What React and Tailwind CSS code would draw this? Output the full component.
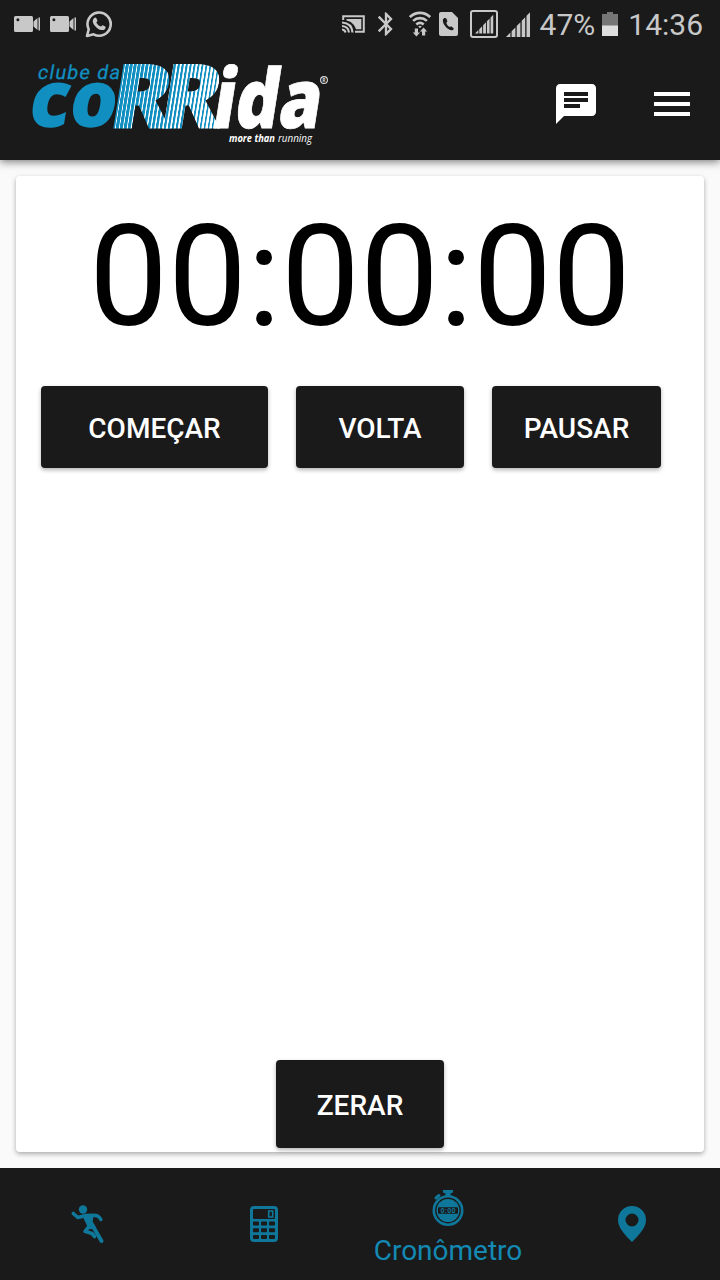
import { useEffect, useState } from 'react';
import { MdChat, MdMenu, MdBluetooth } from 'react-icons/md';

const CamcorderIcon = () => (
  <svg className="w-[26px] h-4" viewBox="0 0 26 16" fill="#c8c8c8">
    <path fillRule="evenodd" d="M1.500 0h16A1.500 1.500 0 0 1 19 1.500v13a1.500 1.500 0 0 1-1.500 1.500h-16A1.500 1.500 0 0 1 0 14.500v-13A1.500 1.500 0 0 1 1.500 0zM3.900 2.300a1.500 1.500 0 1 0 0 3 1.500 1.500 0 0 0 0-3z" />
    <path d="M19.500 5.500L23.500 2v12l-4-3.500zM24.500 1.500H26v13h-1.500z" />
  </svg>
);

const WhatsappIcon = () => (
  <svg className="w-7 h-7" viewBox="0 0 28 28">
    <path d="M2 26l1.700-6.800A11.600 11.600 0 1 1 8.600 24.300z" fill="none" stroke="#c8c8c8" strokeWidth="2.600" strokeLinejoin="round" />
    <path d="M9 8.200c.8-1 1.900-.9 2.400.1l1 2.200c.2.600-.8 1.500-1 2 .8 1.900 2.300 3.200 4.300 4.100.700-.1 1.400-1.500 2-1.300l2.500 1.200c.8.500.4 1.900-.4 2.700-1.800 1.600-4.700.9-7.200-.8-2.300-1.700-4.100-3.900-4.700-6.200-.3-1.600.1-2.900 1.100-4z" fill="#c8c8c8" />
  </svg>
);

const CastIcon = () => (
  <svg className="w-[23px] h-[18px]" viewBox="0 0 23 18">
    <path d="M1.200 5V1.200h20.600v15.600H13" fill="none" stroke="#c8c8c8" strokeWidth="2" />
    <path d="M4.500 4h14.800v10.300H14C12.500 9.500 9 6.300 4.500 5.500z" fill="#c8c8c8" />
    <path d="M0 7.500c6 .3 10 4 10.500 10M0 11c4 .3 6.600 2.700 7 6.500M0 14.500c2 .2 3.300 1.400 3.500 3" fill="none" stroke="#c8c8c8" strokeWidth="2.200" />
  </svg>
);

const WifiIcon = () => (
  <svg className="w-[22px] h-[26px]" viewBox="0 0 22 26">
    <g fill="none" stroke="#c8c8c8" strokeWidth="2.600">
      <path d="M.8 6c6-5.500 14.400-5.500 20.400 0M4.100 9.900c4-3.700 9.800-3.700 13.800 0M7.300 13.500c2.200-2 5.200-2 7.400 0" />
    </g>
    <path d="M9.200 15.300q1.800-1.200 3.600 0L11 17.200zM5.800 17.500h3.200v4h2L7.400 25.500 3.800 21.500h2zM14.600 16.500l3.600 4h-2v4H13v-4h-2z" fill="#c8c8c8" />
  </svg>
);

const CallCardIcon = () => (
  <svg className="w-[19px] h-6" viewBox="0 0 19 24">
    <path d="M2 0h11l6 6v16a2 2 0 0 1-2 2H2a2 2 0 0 1-2-2V2a2 2 0 0 1 2-2z" fill="#c8c8c8" />
    <path d="M5 6.200c-1.800.8-1.300 4.500.9 7.500 2.500 3.400 6.200 5.400 8 4.300.9-.6 1-1.400.4-2l-1.800-1.500c-.7-.4-1.400.6-2.100.3-1.400-.8-2.500-2.300-3-3.900 0-.7 1.100-.8 1-1.600l-.9-2.500c-.4-.9-1.500-1-2.500-.6z" fill="#1a1a1a" />
  </svg>
);

const SignalBars = () => (
  <path d="M0 25L4.400 20.500V25zM5.600 19.300L9.400 15.400V25H5.600zM10.700 14L14.400 10.200V25h-3.700zM15.700 8.800L19.200 5.200V25h-3.500zM20.500 3.800L24 .2V25h-3.500z" />
);

const SimSignalIcon = () => (
  <svg className="w-7 h-7" viewBox="0 0 28 28" fill="#c8c8c8">
    <rect x="1" y="1" width="26" height="26" rx="2" fill="none" stroke="#c8c8c8" strokeWidth="2" />
    <g transform="translate(5 4.500) scale(.76)">
      <SignalBars />
    </g>
  </svg>
);

const SignalIcon = () => (
  <svg className="w-6 h-[25px]" viewBox="0 0 24 25" fill="#c8c8c8">
    <SignalBars />
  </svg>
);

const BatteryIcon = () => (
  <svg className="w-4 h-6" viewBox="0 0 16 24">
    <path d="M0 2h5V0h6v2h5v12H0z" fill="#767676" />
    <path d="M0 13.500h16V24H0z" fill="#dedede" />
  </svg>
);

const StatusBar = () => (
  <div className="h-12 shrink-0 flex items-center pl-[14px] pr-[17px] text-[30px] leading-none text-[#c8c8c8]">
    <CamcorderIcon />
    <div className="ml-[10px]">
      <CamcorderIcon />
    </div>
    <div className="ml-[9px]">
      <WhatsappIcon />
    </div>
    <div className="ml-auto flex items-center">
      <CastIcon />
      <MdBluetooth className="w-7 h-7 ml-[7px]" />
      <div className="ml-[9px]">
        <WifiIcon />
      </div>
      <div className="ml-2">
        <CallCardIcon />
      </div>
      <div className="ml-[12px]">
        <SimSignalIcon />
      </div>
      <div className="ml-[8px]">
        <SignalIcon />
      </div>
      <span className="ml-[10px] mr-[1px] mt-[2px]">47%</span>
      <div className="ml-[6px]">
        <BatteryIcon />
      </div>
      <span className="ml-[10px] mt-[2px]">14:36</span>
    </div>
  </div>
);

const STRIPES = 27;

// blue on the left, fading to white as the stripes get wider
const stripeStops = Array.from({ length: STRIPES }, (_, i) => {
  const start = i / STRIPES;
  const blue = 0.75 - 0.5 * start;
  return [
    { at: start, color: '#118fc0' },
    { at: start + (blue - 0.1) / STRIPES, color: '#118fc0' },
    { at: start + (blue + 0.12) / STRIPES, color: '#ffffff' },
    { at: start + 0.88 / STRIPES, color: '#ffffff' },
  ];
}).flat();

const Logo = () => (
  <svg className="w-[300px] h-28 overflow-visible" viewBox="30 48 300 112" fontFamily="'Open Sans', sans-serif">
    <defs>
      <linearGradient id="stripes" gradientUnits="userSpaceOnUse" x1="5" y1="0" x2="113" y2="0">
        {stripeStops.map((stop, i) => (
          <stop key={i} offset={stop.at} stopColor={stop.color} />
        ))}
      </linearGradient>
    </defs>
    <text transform="translate(37 79) skewX(-10)" fontFamily="Roboto, sans-serif" fontSize="19.500" fill="#118fc0" stroke="#118fc0" strokeWidth=".3" textLength="82" lengthAdjust="spacing">clube da</text>
    <g fontWeight="800">
      <text transform="translate(26.500 127) skewX(-9)" fontSize="79" fill="#118fc0" textLength="88" lengthAdjust="spacingAndGlyphs">co</text>
      <g transform="translate(107 127.500) skewX(-9)" fontSize="89" fill="url(#stripes)" stroke="url(#stripes)" strokeWidth="1">
        <text x="0" textLength="61" lengthAdjust="spacingAndGlyphs">R</text>
        <text x="50" textLength="61" lengthAdjust="spacingAndGlyphs">R</text>
      </g>
      <text transform="translate(210.500 127.500) skewX(-9)" fontSize="82" fill="#fff" stroke="#fff" strokeWidth=".8" textLength="108" lengthAdjust="spacingAndGlyphs">ida</text>
    </g>
    <circle cx="324" cy="80" r="3.400" fill="none" stroke="#ddd" strokeWidth="1.100" />
    <text x="324" y="82" textAnchor="middle" fontSize="5" fontWeight="700" fill="#ddd">R</text>
    <text x="229" y="142" fontSize="10.500" fontStyle="italic" fontWeight="700" fill="#fff" textLength="46" lengthAdjust="spacingAndGlyphs">more than</text>
    <text x="278" y="142" fontSize="10.500" fontStyle="italic" fill="#fff" textLength="34" lengthAdjust="spacingAndGlyphs">running</text>
  </svg>
);

const Header = () => (
  <header className="relative h-40 shrink-0 flex flex-col bg-[#1a1a1a] shadow-[0_2px_8px_rgba(0,0,0,0.5)]">
    <StatusBar />
    <div className="flex-1 flex items-center pl-[30px] pr-6">
      <Logo />
      <button className="ml-auto" aria-label="Mensagens">
        <MdChat className="w-12 h-12 text-white" />
      </button>
      <button className="ml-12" aria-label="Menu">
        <MdMenu className="w-12 h-12 text-white" />
      </button>
    </div>
  </header>
);

const RunnerIcon = () => (
  <svg className="w-9 h-10" viewBox="0 0 36 40" fill="none" stroke="#0f7799" strokeLinecap="round" strokeLinejoin="round">
    <circle cx="13" cy="5.500" r="4.200" fill="#0f7799" stroke="none" />
    <path d="M3.300 9.500l4.500 4 8-2 8-.2c3.500 0 5.500 1.200 7 4.200" strokeWidth="3.600" />
    <path d="M14.500 13.500l7.500-1-.5 5.500 3 5.500-5 .5z" fill="#0f7799" strokeWidth="2.500" />
    <path d="M19 22.500l-4 4.800 7 2.200 2.500 3" strokeWidth="3.600" />
    <path d="M22 20.500l4 7 5.500 9.500" strokeWidth="4" />
  </svg>
);

const CalculatorIcon = () => (
  <svg className="w-7 h-9" viewBox="0 0 28 36">
    <rect width="28" height="36" rx="4" fill="#0f7799" />
    <g fill="#1a1a1a">
      <rect x="3" y="3" width="22" height="10" rx="1" />
      <rect x="3" y="15.500" width="6" height="4" rx="1" />
      <rect x="11" y="15.500" width="6" height="4" rx="1" />
      <rect x="19" y="15.500" width="6" height="4" rx="1" />
      <rect x="3" y="22.300" width="6" height="4" rx="1" />
      <rect x="11" y="22.300" width="6" height="4" rx="1" />
      <rect x="19" y="22.300" width="6" height="4" rx="1" />
      <rect x="3" y="29" width="6" height="4" rx="1" />
      <rect x="11" y="29" width="6" height="4" rx="1" />
      <rect x="19" y="29" width="6" height="4" rx="1" />
    </g>
    <rect x="18.700" y="5" width="4" height="6" fill="none" stroke="#0f7799" strokeWidth="1.600" />
  </svg>
);

const StopwatchIcon = () => (
  <svg className="w-8 h-9" viewBox="0 0 32 36">
    <path d="M11 0h10v2.500l-2.500 1v3h-5v-3l-2.500-1z" fill="#0f7799" />
    <path d="M4 8l3-2.500" stroke="#0f7799" strokeWidth="3" strokeLinecap="round" />
    <circle cx="16" cy="20.500" r="14.200" fill="none" stroke="#0f7799" strokeWidth="2.600" />
    <circle cx="16" cy="20.500" r="11.500" fill="#0f7799" />
    <rect x="6" y="17.300" width="20" height="6.400" rx="1" fill="#1a1a1a" />
    <text x="16" y="23" textAnchor="middle" fontSize="7" fontWeight="700" fill="#0f7799" textLength="15">0:00</text>
  </svg>
);

const PinIcon = () => (
  <svg className="w-7 h-9" viewBox="0 0 28 36">
    <path fillRule="evenodd" d="M14 0a14 14 0 0 1 14 14c0 8-7.500 15.500-14 22C7.500 29.500 0 22 0 14A14 14 0 0 1 14 0zm0 7.500a6.500 6.500 0 1 0 0 13 6.500 6.500 0 0 0 0-13z" fill="#0f7799" />
  </svg>
);

const TabBar = () => (
  <nav className="h-28 shrink-0 flex bg-[#1a1a1a]">
    <button className="w-44 flex items-center justify-center" aria-label="Treinos">
      <RunnerIcon />
    </button>
    <button className="w-44 flex items-center justify-center" aria-label="Calculadora">
      <CalculatorIcon />
    </button>
    <button className="w-48 flex flex-col items-center pt-[22px]">
      <StopwatchIcon />
      <span className="mt-[9px] text-[28px] leading-8 text-[#1389b3]">Cronômetro</span>
    </button>
    <button className="w-44 flex items-center justify-center" aria-label="Locais">
      <PinIcon />
    </button>
  </nav>
);

const buttonClass = 'rounded-[4px] bg-[#1a1a1a] pt-1 text-[28px] font-medium leading-none text-white shadow-[0_2px_4px_rgba(0,0,0,0.3)]';

const pad = (n) => String(n).padStart(2, '0');

export default function App() {
  const [running, setRunning] = useState(false);
  const [seconds, setSeconds] = useState(0);
  const [laps, setLaps] = useState([]);

  useEffect(() => {
    if (!running) return;
    const timer = setInterval(() => setSeconds((s) => s + 1), 1000);
    return () => clearInterval(timer);
  }, [running]);

  const time = `${pad(Math.floor(seconds / 3600))}:${pad(Math.floor(seconds / 60) % 60)}:${pad(seconds % 60)}`;

  const reset = () => {
    setRunning(false);
    setSeconds(0);
    setLaps([]);
  };

  return (
    <div className="w-[720px] h-[1280px] flex flex-col overflow-hidden bg-[#fafafa] font-[Roboto,sans-serif]">
      <Header />

      <main className="flex-1 min-h-0 p-4">
        <section className="h-full flex flex-col rounded-[4px] bg-white pb-1 shadow-[0_2px_5px_rgba(0,0,0,0.32)]">
          <div className="mt-[19px] h-[164px] flex items-center justify-center text-[140.600px] leading-none text-black">
            {time}
          </div>

          <div className="mt-[27px] ml-[25px] flex gap-7">
            <button className={`w-[227px] h-[82px] ${buttonClass}`} onClick={() => setRunning(true)}>
              COMEÇAR
            </button>
            <button className={`w-[168px] h-[82px] ${buttonClass}`} onClick={() => setLaps([...laps, time])}>
              VOLTA
            </button>
            <button className={`w-[169px] h-[82px] ${buttonClass}`} onClick={() => setRunning(false)}>
              PAUSAR
            </button>
          </div>

          {/* Laps */}
          <ul className="flex-1 min-h-0 overflow-auto px-[25px] py-6 text-[28px]">
            {laps.map((lap, i) => (
              <li key={i}>{lap}</li>
            ))}
          </ul>

          <button className={`w-[168px] h-[88px] self-center ${buttonClass}`} onClick={reset}>
            ZERAR
          </button>
        </section>
      </main>

      <TabBar />
    </div>
  );
}
